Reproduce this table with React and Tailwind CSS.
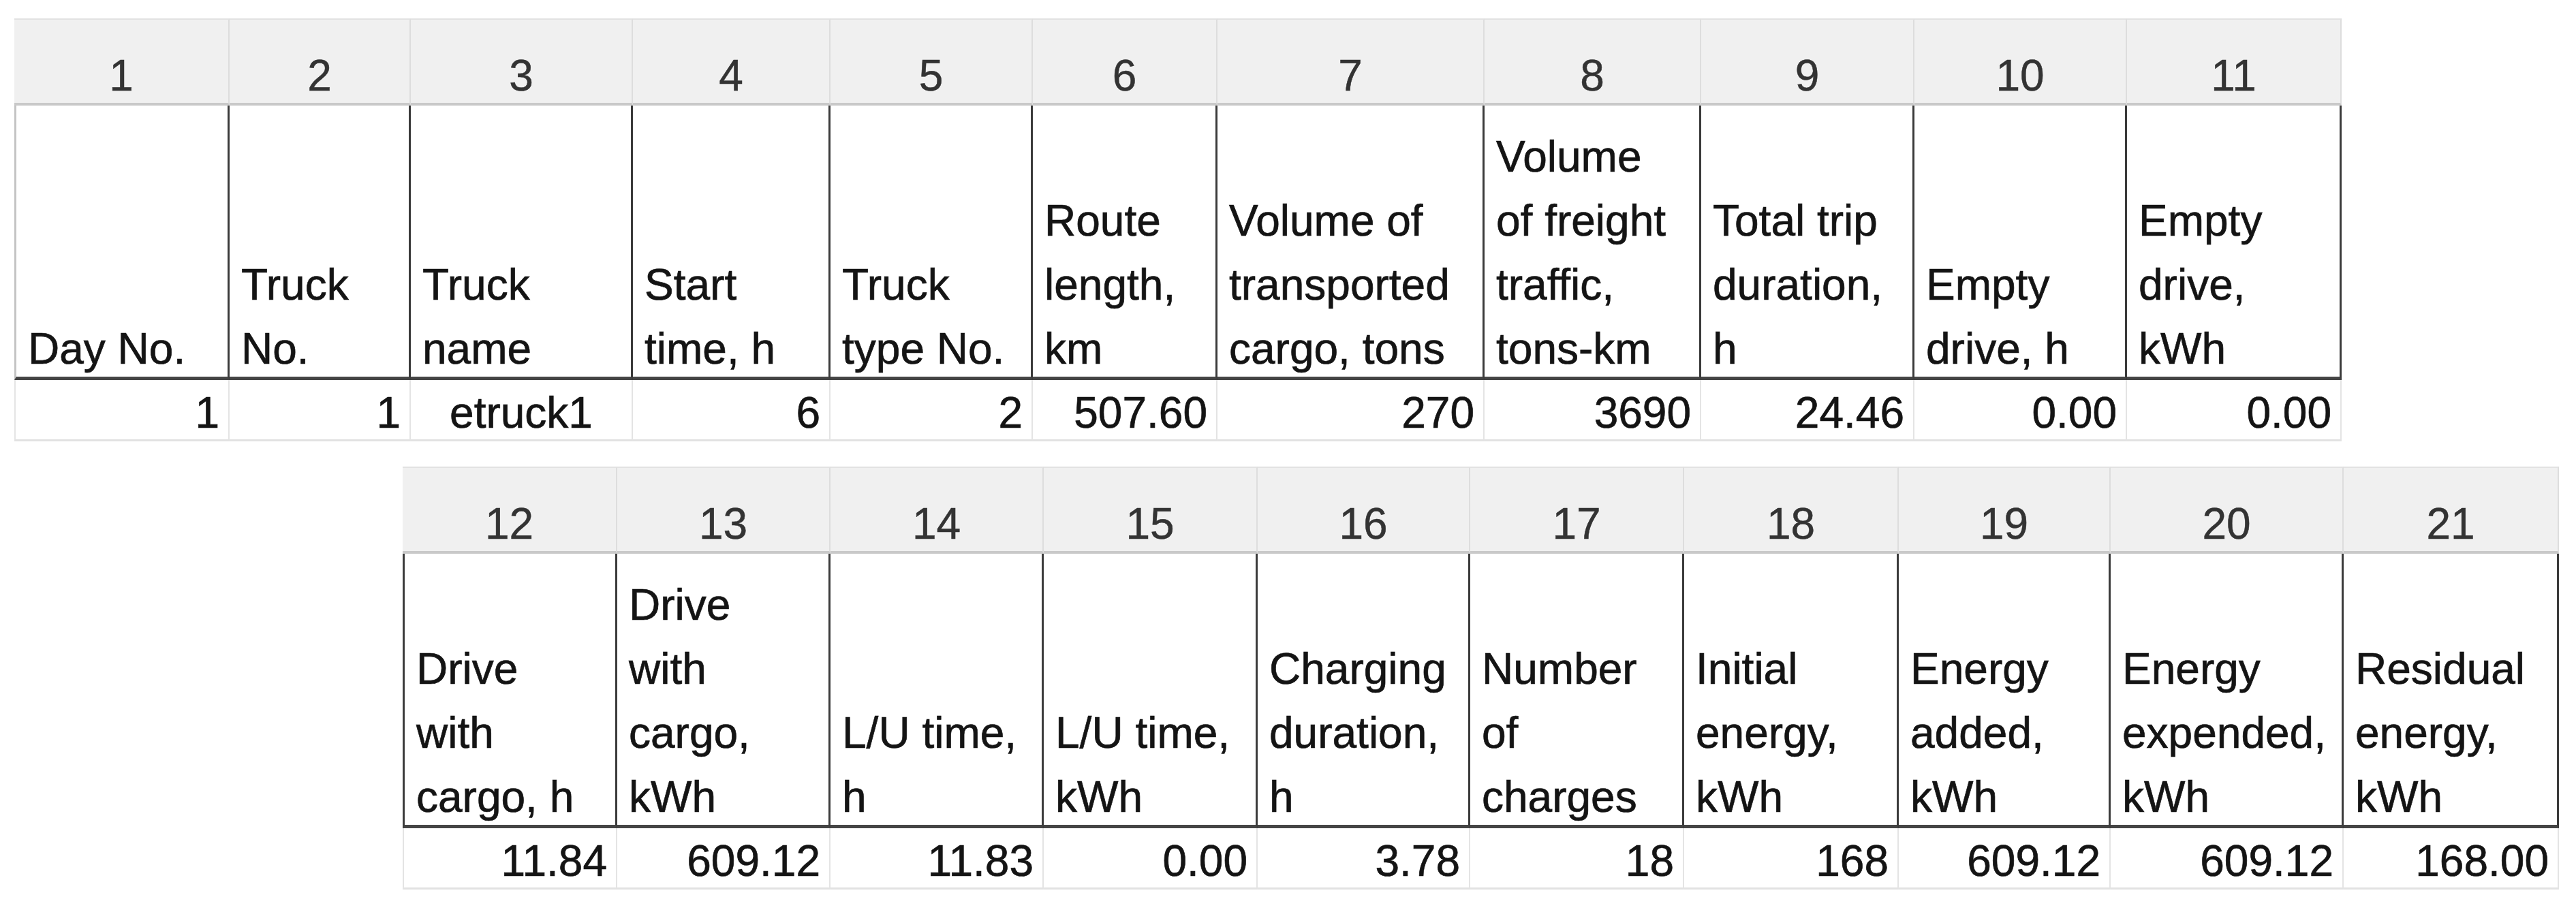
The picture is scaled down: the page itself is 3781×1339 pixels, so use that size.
import React from "react";

const topColumns = [
  { n: "1", head: ["Day No."], value: "1" },
  { n: "2", head: ["Truck", "No."], value: "1" },
  { n: "3", head: ["Truck", "name"], value: "etruck1", center: true },
  { n: "4", head: ["Start", "time, h"], value: "6" },
  { n: "5", head: ["Truck", "type No."], value: "2" },
  { n: "6", head: ["Route", "length,", "km"], value: "507.60" },
  { n: "7", head: ["Volume of", "transported", "cargo, tons"], value: "270" },
  { n: "8", head: ["Volume", "of freight", "traffic,", "tons-km"], value: "3690" },
  { n: "9", head: ["Total trip", "duration,", "h"], value: "24.46" },
  { n: "10", head: ["Empty", "drive, h"], value: "0.00" },
  { n: "11", head: ["Empty", "drive,", "kWh"], value: "0.00" },
];

const bottomColumns = [
  { n: "12", head: ["Drive", "with", "cargo, h"], value: "11.84" },
  { n: "13", head: ["Drive", "with", "cargo,", "kWh"], value: "609.12" },
  { n: "14", head: ["L/U time,", "h"], value: "11.83" },
  { n: "15", head: ["L/U time,", "kWh"], value: "0.00" },
  { n: "16", head: ["Charging", "duration,", "h"], value: "3.78" },
  { n: "17", head: ["Number", "of", "charges"], value: "18" },
  { n: "18", head: ["Initial", "energy,", "kWh"], value: "168" },
  { n: "19", head: ["Energy", "added,", "kWh"], value: "609.12" },
  { n: "20", head: ["Energy", "expended,", "kWh"], value: "609.12" },
  { n: "21", head: ["Residual", "energy,", "kWh"], value: "168.00" },
];

// one excel-like block: numbered band, header row, single data row
const SheetTable = ({ columns, gridClass, firstHeadBorder }) => (
  <div className={`grid ${gridClass} grid-rows-[128px_403px_90px]`}>
    {columns.map((c) => (
      <div
        key={`n${c.n}`}
        className="bg-[#f0f0f0] border-t-2 border-t-[#e2e2e2] border-b-4 border-b-[#c9c9c9] border-r-2 border-r-[#dddddd] pt-[50px] text-center leading-[64px] text-[#333333] [-webkit-text-stroke:0.5px_#333333]"
      >
        {c.n}
      </div>
    ))}
    {columns.map((c, i) => (
      <div
        key={`h${c.n}`}
        className={`flex flex-col justify-end border-r-[3px] border-r-[#3b3b3b] border-b-[5px] border-b-[#454545] pl-[17px] text-[#141414] [-webkit-text-stroke:0.7px_#141414] ${
          i === 0 ? firstHeadBorder : ""
        }`}
      >
        <div className="-mb-[6px] whitespace-nowrap leading-[94px]">
          {c.head.map((line) => (
            <div key={line}>{line}</div>
          ))}
        </div>
      </div>
    ))}
    {columns.map((c, i) => (
      <div
        key={`v${c.n}`}
        className={`border-r-2 border-r-[#e4e4e4] border-b-[3px] border-b-[#e2e2e2] pt-[16px] leading-[64px] text-[#141414] [-webkit-text-stroke:0.7px_#141414] ${
          c.center ? "text-center" : "text-right pr-[13px]"
        } ${i === 0 ? "border-l-2 border-l-[#e4e4e4]" : ""}`}
      >
        {c.value}
      </div>
    ))}
  </div>
);

export default function App() {
  return (
    <div
      className="w-[3781px] h-[1339px] bg-white pt-[27px] text-[64px] overflow-hidden"
      style={{ fontFamily: '"Liberation Sans", Arial, sans-serif' }}
    >
      <div className="ml-[21px]">
        <SheetTable
          columns={topColumns}
          gridClass="w-[3416px] grid-cols-[316px_266px_326px_290px_297px_271px_392px_318px_313px_312px_315px]"
          firstHeadBorder="border-l-[3px] border-l-[#c4c4c4]"
        />
      </div>
      <div className="ml-[591px] mt-[37px]">
        <SheetTable
          columns={bottomColumns}
          gridClass="w-[3165px] grid-cols-[315px_313px_313px_314px_312px_314px_315px_311px_342px_316px]"
          firstHeadBorder="border-l-[3px] border-l-[#3b3b3b]"
        />
      </div>
    </div>
  );
}
